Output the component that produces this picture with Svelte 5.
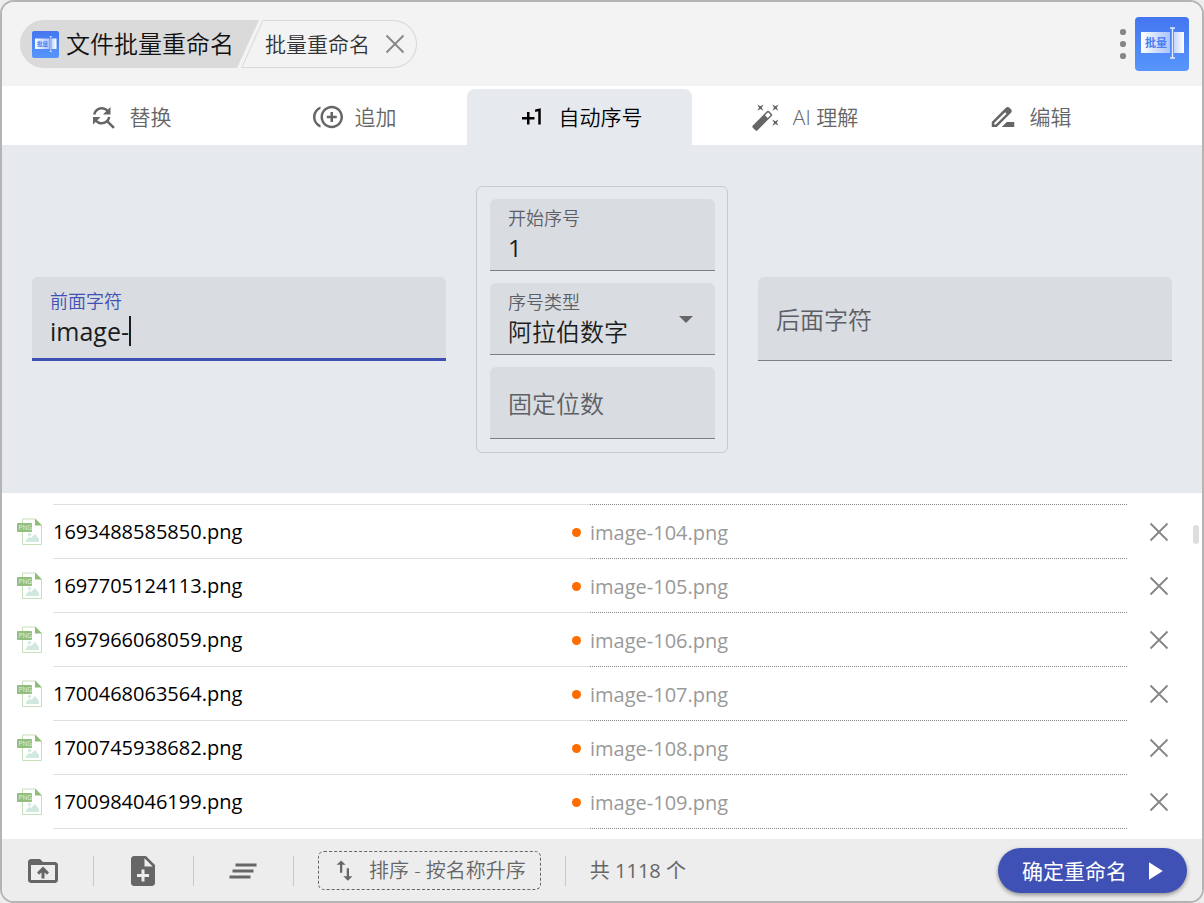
<script>
  let tabs = [
    { name: '替换', icon: 'M11 6c1.38 0 2.63.56 3.54 1.46L12 10h6V4l-2.05 2.05C14.68 4.78 12.93 4 11 4c-3.53 0-6.43 2.61-6.92 6H6.1c.46-2.28 2.48-4 4.9-4zm5.64 9.14c.66-.9 1.12-1.97 1.28-3.14H15.9c-.46 2.28-2.48 4-4.9 4-1.38 0-2.63-.56-3.54-1.46L10 12H4v6l2.05-2.05C7.32 17.22 9.07 18 11 18c1.55 0 2.98-.51 4.14-1.36L20 21.49 21.49 20l-4.85-4.86z' },
    { name: '追加', icon: 'M16 8h-2v3h-3v2h3v3h2v-3h3v-2h-3zM2 12c0-2.79 1.64-5.2 4.01-6.32V3.52C2.52 4.76 0 8.09 0 12s2.52 7.24 6.01 8.48v-2.16A7.01 7.01 0 0 1 2 12M15 3c-4.96 0-9 4.04-9 9s4.04 9 9 9 9-4.04 9-9-4.04-9-9-9m0 16c-3.86 0-7-3.14-7-7s3.14-7 7-7 7 3.14 7 7-3.14 7-7 7' },
    { name: '自动序号', icon: 'M10 8H8v4H4v2h4v4h2v-4h4v-2h-4zm4.5-1.92V7.9l2.5-.5V18h2V5z' },
    { name: 'AI 理解', icon: 'M7.5 5.6 10 7 8.6 4.5 10 2 7.5 3.4 5 2l1.4 2.5L5 7zm12 9.8L17 14l1.4 2.5L17 19l2.5-1.4L22 19l-1.4-2.5L22 14zM22 2l-2.5 1.4L17 2l1.4 2.5L17 7l2.5-1.4L22 7l-1.4-2.5zm-7.63 5.29a.996.996 0 0 0-1.41 0L1.29 18.96c-.39.39-.39 1.02 0 1.41l2.34 2.34c.39.39 1.02.39 1.41 0L16.7 11.05c.39-.39.39-1.02 0-1.41zm-1.03 5.49-2.12-2.12 2.44-2.44 2.12 2.12z' },
    { name: '编辑', icon: 'M18.41 5.8 17.2 4.59c-.78-.78-2.05-.78-2.83 0l-2.68 2.68L3 15.96V20h4.04l8.74-8.74 2.63-2.63c.79-.78.79-2.05 0-2.83zM6.21 18H5v-1.21l8.66-8.66 1.21 1.21zM11 20l4-4h6v4z' }
  ];

  let actions = [
    { name: 'Add folder', icon: 'M20 6h-8l-2-2H4c-1.1 0-1.99.9-1.99 2L2 18c0 1.1.9 2 2 2h16c1.1 0 2-.9 2-2V8c0-1.1-.9-2-2-2m0 12H4V8h16zM8 13.01l1.41 1.41L11 12.84V17h2v-4.16l1.59 1.59L16 13.01 12.01 9z' },
    { name: 'Add file', icon: 'M14 2H6c-1.1 0-1.99.9-1.99 2L4 20c0 1.1.89 2 1.99 2H18c1.1 0 2-.9 2-2V8zm2 14h-3v3h-2v-3H8v-2h3v-3h2v3h3zm-3-7V3.5L18.5 9z' },
    { name: 'Clear all', icon: 'M5 13h14v-2H5zm-2 4h14v-2H3zM7 7v2h14V7z' }
  ];

  let files = [
    '1693488585850.png',
    '1697705124113.png',
    '1697966068059.png',
    '1700468063564.png',
    '1700745938682.png',
    '1700984046199.png'
  ];

  let activeTab = 2;
  let prefix = 'image-';
  let suffix = '';
  let start = '1';
  let type = '阿拉伯数字';
  let digits = '';
  let firstVisible = 103; // rows scrolled above the visible part

  $: previews = files.map((_, i) => prefix + (Number(start) + firstVisible + i) + suffix + '.png');

  function removeFile(index) {
    files = files.filter((_, i) => i !== index);
  }
</script>

{#snippet logo(size)}
  <svg class="logo" width={size} height={size} viewBox="0 0 54 54" aria-hidden="true">
    <defs>
      <linearGradient id="logo-bg" x1="0" y1="0" x2="0" y2="1">
        <stop offset="0" stop-color="#4476f0" />
        <stop offset="1" stop-color="#5796fc" />
      </linearGradient>
      <linearGradient id="logo-box" x1="0" y1="0" x2="1" y2="0">
        <stop offset="0" stop-color="#ffffff" />
        <stop offset="1" stop-color="#a9c3fb" />
      </linearGradient>
      <linearGradient id="logo-end" x1="0" y1="0" x2="1" y2="0">
        <stop offset="0" stop-color="#c4d6fc" />
        <stop offset="1" stop-color="#ffffff" />
      </linearGradient>
    </defs>
    <rect width="54" height="54" rx="4" fill="url(#logo-bg)" />
    <rect x="6" y="15" width="29" height="21" fill="url(#logo-box)" />
    <rect x="39" y="15" width="10" height="21" fill="url(#logo-end)" />
    <path d="M35 11h5M35 41h5M37.5 11v30" stroke="#e4edff" stroke-width="1.4" fill="none" />
    <text x="10" y="29.5" font-size="11" font-weight="700" fill="#4a7df2">批量</text>
  </svg>
{/snippet}

{#snippet cross()}
  <svg width="20" height="20" viewBox="0 0 20 20" aria-hidden="true">
    <path d="M1.5 1.5l17 17M18.5 1.5l-17 17" stroke="currentColor" stroke-width="1.8" fill="none" />
  </svg>
{/snippet}

<main>
  <header>
    <nav class="crumbs">
      <div class="crumb root">
        <div class="root-body">
          {@render logo(27)}
          <span>文件批量重命名</span>
        </div>
        <svg width="22" height="48" viewBox="0 0 22 48" aria-hidden="true"><path d="M0 0h22L0 48z" fill="#dadada" /></svg>
      </div>
      <div class="crumb current">
        <svg width="22" height="48" viewBox="0 0 22 48" aria-hidden="true"><path d="M22 .5h-.2L.8 47.5H22" fill="none" stroke="#d8d8d8" /></svg>
        <div class="current-body">
          <span>批量重命名</span>
          <button class="close" aria-label="Close">{@render cross()}</button>
        </div>
      </div>
    </nav>
    <div class="window-tools">
      <button class="more" aria-label="More">
        <svg width="8" height="32" viewBox="0 0 8 32"><circle cx="4" cy="4" r="3.1" /><circle cx="4" cy="16" r="3.1" /><circle cx="4" cy="28" r="3.1" /></svg>
      </button>
      {@render logo(54)}
    </div>
  </header>

  <div class="tabs" role="tablist">
    {#each tabs as tab, i (tab.name)}
      <button class="tab" class:active={i === activeTab} role="tab" aria-selected={i === activeTab} on:click={() => (activeTab = i)}>
        <svg width="30" height="30" viewBox="0 0 24 24"><path d={tab.icon} /></svg>
        <span>{tab.name}</span>
      </button>
    {/each}
  </div>

  <section class="panel">
    <label class="field large focused">
      <span class="label">前面字符</span>
      <span class="entry">
        <input bind:value={prefix} />
        <span class="caret"></span>
      </span>
    </label>

    <div class="number-box">
      <label class="field">
        <span class="label">开始序号</span>
        <input bind:value={start} />
      </label>
      <label class="field">
        <span class="label">序号类型</span>
        <select bind:value={type}>
          <option>阿拉伯数字</option>
        </select>
        <svg class="arrow" width="14" height="7" viewBox="0 0 14 7"><path d="M0 0h14L7 7z" fill="#666" /></svg>
      </label>
      <label class="field">
        <input bind:value={digits} placeholder="固定位数" aria-label="固定位数" />
      </label>
    </div>

    <label class="field large">
      <input bind:value={suffix} placeholder="后面字符" aria-label="后面字符" />
    </label>
  </section>

  <section class="list">
    <ul>
      {#each files as file, i (file)}
        <li>
          <svg class="file-icon" width="26" height="28" viewBox="0 0 26 28" aria-hidden="true">
            <path d="M5.5 1h13l6 6.5V26.5h-19z" fill="#fff" stroke="#c6dfba" />
            <path d="M18 .5l7 7h-7z" fill="#8fbd79" />
            <circle cx="12.5" cy="16.5" r="1.7" fill="#d5ece4" />
            <path d="M9 24v-2l3-3 2 1 4-4 4 5v3z" fill="#cfe9df" />
            <rect x="0" y="5" width="15" height="9" rx="1" fill="#92bf7d" />
            <text x="1.5" y="12" font-size="6.5" fill="#e5f3dd">PNG</text>
          </svg>
          <span class="name">{file}</span>
          <span class="preview">{previews[i]}</span>
          <button class="close" aria-label="Remove" on:click={() => removeFile(i)}>{@render cross()}</button>
        </li>
      {/each}
    </ul>
    <div class="thumb"></div>
  </section>

  <footer>
    {#each actions as action (action.name)}
      <button class="action" aria-label={action.name}>
        <svg width="36" height="36" viewBox="0 0 24 24"><path d={action.icon} /></svg>
      </button>
      <span class="divider"></span>
    {/each}
    <button class="sort">
      <svg width="27" height="27" viewBox="0 0 24 24"><path d="M16 17.01V10h-2v7.01h-3L15 21l4-3.99zM9 3 5 6.99h3V14h2V6.99h3z" /></svg>
      <span>排序 - 按名称升序</span>
    </button>
    <span class="divider"></span>
    <span class="count">共 1118 个</span>
    <button class="confirm">
      <span>确定重命名</span>
      <svg width="30" height="30" viewBox="0 0 24 24"><path d="M8 5v14l11-7z" /></svg>
    </button>
  </footer>
</main>

<style>
  :global(body) {
    background: #ededed;
  }

  main {
    box-sizing: border-box;
    min-height: 100vh;
    display: flex;
    flex-direction: column;
    border: 2px solid #b4b4b4;
    border-radius: 14px;
    overflow: hidden;
    background: #fff;
    color: #000;
    font-family: 'Open Sans', 'Noto Sans CJK SC', sans-serif;
    font-size: 20px;
    font-weight: 350;
    line-height: 28px;
  }

  button, input, select {
    font: inherit;
    color: inherit;
    margin: 0;
    padding: 0;
    border: none;
    background: none;
    outline: none;
  }

  button {
    display: flex;
    align-items: center;
    cursor: pointer;
  }

  svg {
    display: block;
    flex: none;
    fill: currentColor;
  }

  span {
    white-space: nowrap;
  }

  header {
    display: flex;
    align-items: center;
    justify-content: space-between;
    height: 84px;
    padding: 0 13px 0 18px;
    background: #f3f3f3;
  }

  .crumbs, .crumb, .root-body, .current-body, .window-tools {
    display: flex;
    align-items: center;
  }

  .root-body {
    height: 48px;
    padding: 0 3px 0 12px;
    gap: 7px;
    border-radius: 24px 0 0 24px;
    background: #dadada;
    color: #111;
    font-size: 24px;
  }

  .current {
    margin-left: -18px;
  }

  .current-body {
    box-sizing: border-box;
    height: 48px;
    padding: 0 11px 0 2px;
    gap: 15px;
    border: 1px solid #d8d8d8;
    border-left: none;
    border-radius: 0 24px 24px 0;
    color: #333;
    font-size: 21px;
  }

  .close, .more {
    color: #858585;
  }

  .window-tools {
    gap: 8px;
  }

  .tabs {
    display: flex;
    padding: 3px 60px 0 15px;
  }

  .tab {
    flex: 1;
    justify-content: center;
    height: 56px;
    gap: 12px;
    border-radius: 8px 8px 0 0;
    color: #666;
    font-size: 21px;
  }

  .tab.active {
    background: #e6e9ee;
    color: #000;
  }

  .panel {
    display: flex;
    align-items: center;
    gap: 30px;
    padding: 41px 30px 40px;
    background: #e6e9ee;
  }

  .field {
    box-sizing: border-box;
    position: relative;
    display: flex;
    flex-direction: column;
    justify-content: center;
    height: 72px;
    padding: 2px 18px 0;
    border-bottom: 1px solid #7d8084;
    border-radius: 6px 6px 0 0;
    background: #d9dce0;
    color: #1c1c1c;
    font-size: 24px;
  }

  .field.large {
    flex: 1;
    min-width: 0;
    height: 84px;
    margin-bottom: 1px;
  }

  .field.focused {
    border-bottom: 3px solid #3f51b5;
  }

  .label {
    color: #5c6066;
    font-size: 18px;
    line-height: 24px;
  }

  .focused .label {
    color: #3f51b5;
  }

  .field input, .field select {
    width: 100%;
    height: 36px;
    line-height: 36px;
  }

  .field input {
    font-weight: 400;
  }

  .field select {
    appearance: none;
  }

  .field input::placeholder {
    color: #5c6066;
    font-weight: 350;
    opacity: 1;
  }

  .entry {
    display: flex;
    align-items: center;
  }

  .entry input {
    width: auto;
    field-sizing: content;
    font-size: 25px;
    caret-color: transparent;
  }

  .caret {
    width: 2px;
    height: 30px;
    background: #1c1c1c;
  }

  .arrow {
    position: absolute;
    top: 33px;
    right: 22px;
    pointer-events: none;
  }

  .number-box {
    box-sizing: border-box;
    display: flex;
    flex-direction: column;
    width: 252px;
    gap: 12px;
    padding: 12px 12px 13px 13px;
    border: 1px solid #c8cacc;
    border-radius: 6px;
  }

  .list {
    position: relative;
    flex: 1;
    padding: 11px 0 10px;
  }

  ul {
    margin: 0;
    padding: 0;
    list-style: none;
  }

  li {
    display: grid;
    grid-template-columns: 51px 1fr 1fr 75px;
    align-items: center;
    height: 54px;
    font-weight: 400;
  }

  .file-icon {
    margin-left: 15px;
  }

  .name, .preview {
    box-sizing: border-box;
    height: 54px;
    line-height: 54px;
    border-bottom: 1px solid #e0e0e0;
  }

  .preview {
    position: relative;
    border-bottom: 1px dotted #888;
    color: #999;
    line-height: 56px;
  }

  /* the first row also closes off the one scrolled away above it */
  li:first-child {
    height: 55px;
  }

  li:first-child .name, li:first-child .preview {
    height: 55px;
    border-top: 1px solid #e0e0e0;
  }

  li:first-child .preview {
    border-top: 1px dotted #888;
  }

  .preview::before {
    content: '';
    position: absolute;
    top: 23px;
    left: -18px;
    width: 9px;
    height: 9px;
    border-radius: 50%;
    background: #ff6d00;
  }

  li .close {
    justify-self: center;
    margin-right: 11px;
  }

  .thumb {
    position: absolute;
    top: 32px;
    right: 3px;
    width: 6px;
    height: 19px;
    border-radius: 3px;
    background: #dedede;
  }

  footer {
    box-sizing: border-box;
    display: flex;
    align-items: center;
    height: 62px;
    padding: 1px 15px 0 23px;
    gap: 24px;
    background: #ededed;
    color: #666;
  }

  .action {
    margin: 0 8px 0 0;
  }

  .divider + .action {
    margin: 0 8px 0 7px;
  }

  .divider {
    width: 1px;
    height: 30px;
    background: #c8c8c8;
  }

  .sort {
    box-sizing: border-box;
    height: 39px;
    padding: 0 14px 0 12px;
    gap: 11px;
    border: 1px dashed #666;
    border-radius: 6px;
  }

  .count {
    font-weight: 400;
  }

  .confirm {
    height: 45px;
    margin-left: auto;
    padding: 0 18px 0 24px;
    gap: 12px;
    border-radius: 23px;
    background: #3f51b5;
    box-shadow: 0 2px 4px rgba(0, 0, 0, 0.4);
    color: #fff;
    font-size: 21px;
    font-weight: 400;
  }
</style>
